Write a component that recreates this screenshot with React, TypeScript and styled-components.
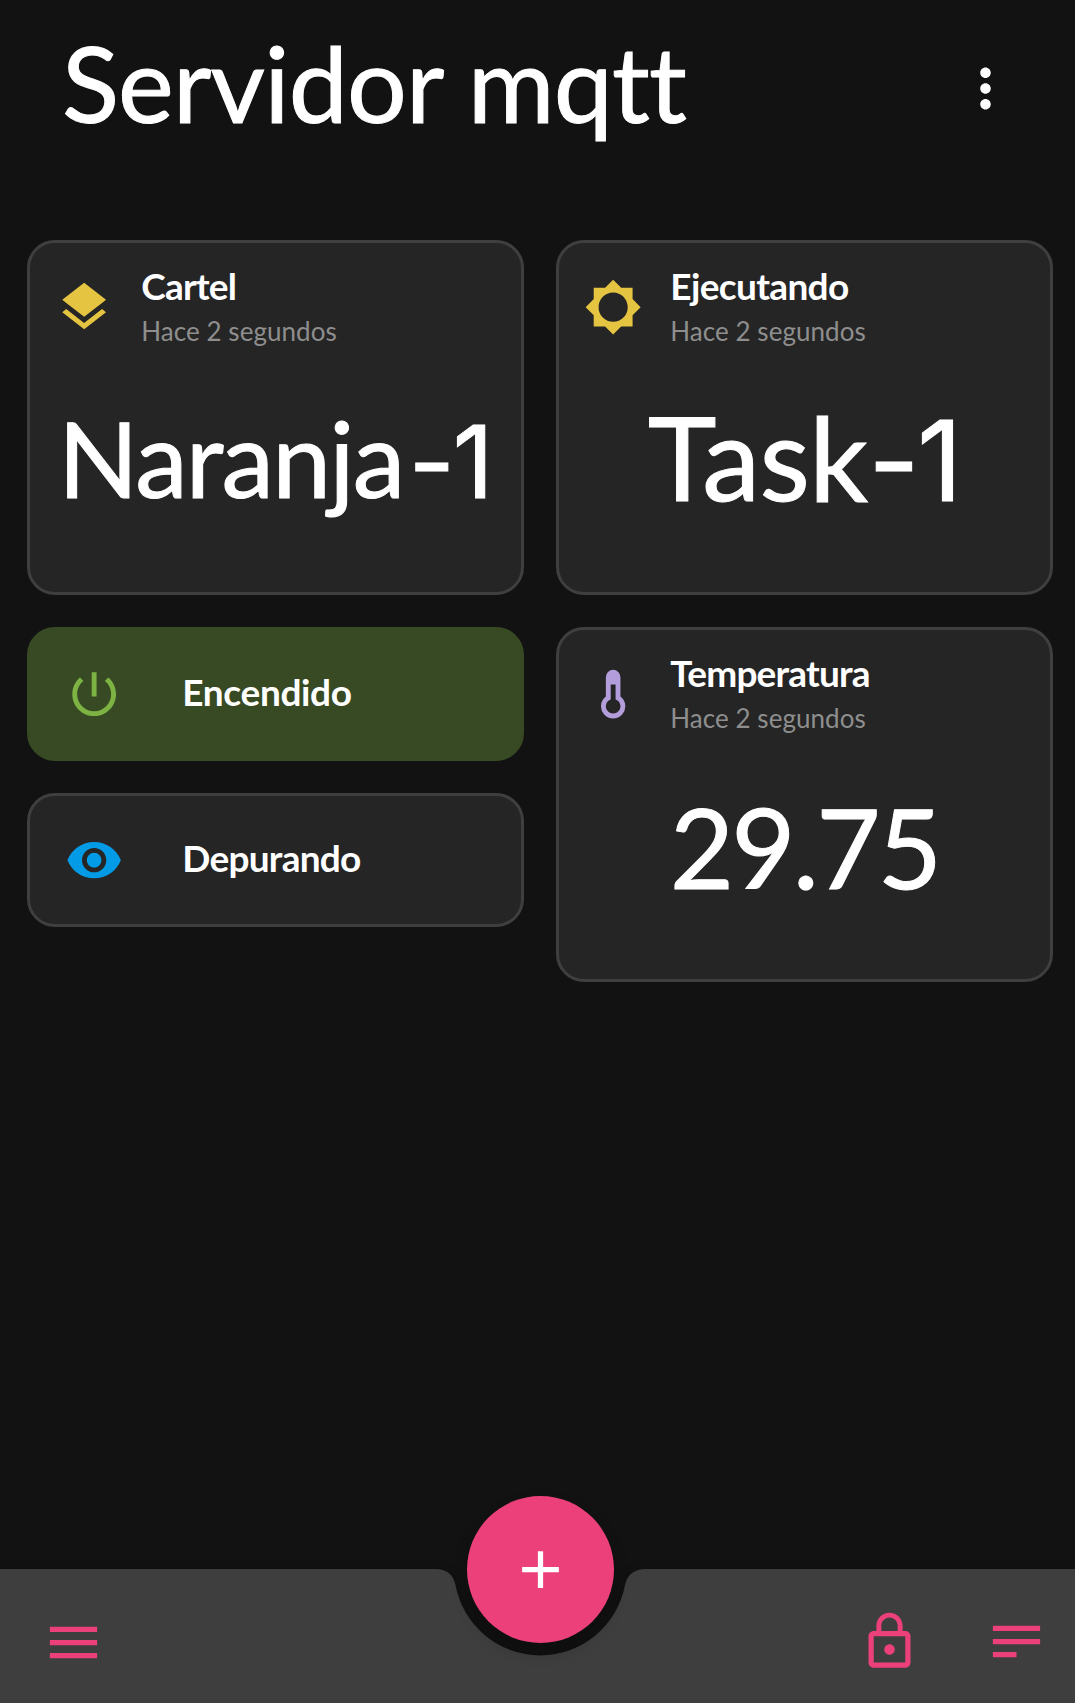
import React from "react";
import styled, { createGlobalStyle } from "styled-components";

const GlobalStyle = createGlobalStyle`
  * { box-sizing: border-box; }
  body { margin: 0; background: #121212; }
`;

const Screen = styled.div`
  position: relative;
  display: flex;
  flex-direction: column;
  width: 1075px;
  height: 1703px;
  overflow: hidden;
  background: #121212;
  color: #fff;
  font-family: Lato, "Open Sans", sans-serif;
`;

const Header = styled.header`
  display: flex;
  align-items: center;
  justify-content: space-between;
  height: 177px;
  padding: 0 58px 0 62px;
`;

const Title = styled.h1`
  margin: 0;
  padding-bottom: 13px;
  font-size: 105.5px;
  line-height: 126px;
  font-weight: 400;
  letter-spacing: -0.8px;
  white-space: nowrap;
  -webkit-text-stroke: 1px #fff;
`;

const Glyph = styled.svg<{ $size: number }>`
  display: block;
  flex: none;
  width: ${(p) => p.$size}px;
  height: ${(p) => p.$size}px;
  fill: currentColor;
`;

const IconButton = styled.button<{ $color: string }>`
  display: flex;
  padding: 0;
  border: 0;
  background: none;
  color: ${(p) => p.$color};
`;

const Board = styled.main`
  display: flex;
  gap: 32px;
  align-items: flex-start;
  padding: 63px 22px 0 27px;
`;

const Column = styled.div`
  display: flex;
  flex-direction: column;
  gap: 32px;
  width: 497px;
`;

const Tile = styled.section`
  display: flex;
  flex-direction: column;
  height: 355px;
  border: 3px solid #3f3f3f;
  border-radius: 28px;
  background: #252525;
`;

const TileHead = styled.div`
  display: flex;
  align-items: center;
  gap: 28px;
  height: 109px;
  padding: 21px 0 0 25px;
`;

const TileIcon = styled.span<{ $color: string }>`
  display: flex;
  padding-bottom: 2px;
  color: ${(p) => p.$color};
`;

const Name = styled.div<{ $spacing: number }>`
  font-size: 37px;
  line-height: 44px;
  font-weight: 700;
  letter-spacing: ${(p) => p.$spacing}px;
  white-space: nowrap;
`;

const Age = styled.div`
  padding-top: 2px;
  font-size: 26px;
  line-height: 43px;
  letter-spacing: 0.05px;
  color: #8e8e8e;
  white-space: nowrap;
`;

const Value = styled.div<{ $size: number; $spacing: number; $lift: number }>`
  display: flex;
  flex: 1;
  align-items: center;
  justify-content: center;
  padding-bottom: ${(p) => p.$lift}px;
  font-size: ${(p) => p.$size}px;
  line-height: 1.2;
  letter-spacing: ${(p) => p.$spacing}px;
  white-space: nowrap;
  -webkit-text-stroke: 1px #fff;
`;

const Suffix = styled.span<{ $gap: number }>`
  margin: 0 1.4px 0 ${(p) => p.$gap}px;
  font-family: Inter, sans-serif;
  font-size: 0.95em;
  line-height: 0;
  letter-spacing: -0.02em;
`;

const Toggle = styled.section<{ $on?: boolean }>`
  display: flex;
  align-items: center;
  gap: 59px;
  height: 134px;
  padding-left: 35px;
  border: 3px solid ${(p) => (p.$on ? "#384a23" : "#3f3f3f")};
  border-radius: 28px;
  background: ${(p) => (p.$on ? "#384a23" : "#252525")};
`;

const ToggleIcon = styled.span<{ $color: string }>`
  display: flex;
  color: ${(p) => p.$color};
`;

const ToggleName = styled(Name)`
  padding-bottom: 4px;
`;

const BottomBar = styled.nav`
  position: relative;
  display: flex;
  align-items: center;
  height: 134px;
  margin-top: auto;
  padding: 13px 27.5px 0 42px;
`;

const BarShape = styled.svg`
  position: absolute;
  inset: 0;
  width: 1075px;
  height: 134px;
  overflow: visible;
  fill: #3e3e3e;
  filter: drop-shadow(0 0 4px rgba(0, 0, 0, 0.25));
`;

const BarActions = styled.div`
  position: relative;
  display: flex;
  gap: 63.5px;
  margin-left: auto;
  padding-bottom: 2px;
`;

const BarStart = styled.div`
  position: relative;
`;

const Fab = styled.button`
  position: absolute;
  left: 467px;
  top: -73px;
  display: flex;
  align-items: center;
  justify-content: center;
  width: 147px;
  height: 147px;
  padding: 0;
  border: 0;
  border-radius: 50%;
  background: #ec407a;
  color: #fff;
  box-shadow: 0 9px 16px rgba(0, 0, 0, 0.22);
`;

const paths = {
  more: "M12 8c1.1 0 2-.9 2-2s-.9-2-2-2-2 .9-2 2 .9 2 2 2zm0 2c-1.1 0-2 .9-2 2s.9 2 2 2 2-.9 2-2-.9-2-2-2zm0 6c-1.1 0-2 .9-2 2s.9 2 2 2 2-.9 2-2-.9-2-2-2z",
  layers:
    "M11.99 18.54l-7.37-5.73L3 14.07l9 7 9-7-1.63-1.27-7.38 5.74zM12 16l7.36-5.73L21 9l-9-7-9 7 1.63 1.27L12 16z",
  brightness:
    "M20 15.31L23.31 12 20 8.69V4h-4.69L12 .69 8.69 4H4v4.69L.69 12 4 15.31V20h4.69L12 23.31 15.31 20H20v-4.69zM12 18c-3.31 0-6-2.69-6-6s2.69-6 6-6 6 2.69 6 6-2.69 6-6 6z",
  thermometer:
    "M15 13V5a3 3 0 0 0-6 0v8a5 5 0 1 0 6 0zM11 8h2v6.17a3 3 0 1 1-2 0z",
  power:
    "M13 3h-2v10h2V3zm4.83 2.17l-1.42 1.42C17.99 7.86 19 9.81 19 12c0 3.87-3.13 7-7 7s-7-3.13-7-7c0-2.19 1.01-4.14 2.58-5.42L6.17 5.17C4.23 6.82 3 9.26 3 12c0 4.97 4.03 9 9 9s9-4.03 9-9c0-2.74-1.23-5.18-3.17-6.83z",
  eye: "M12 4.5C7 4.5 2.73 7.61 1 12c1.73 4.39 6 7.5 11 7.5s9.27-3.11 11-7.5c-1.73-4.39-6-7.5-11-7.5zM12 17c-2.76 0-5-2.24-5-5s2.24-5 5-5 5 2.24 5 5-2.24 5-5 5zm0-8c-1.66 0-3 1.34-3 3s1.34 3 3 3 3-1.34 3-3-1.34-3-3-3z",
  menu: "M3 18h18v-2H3v2zm0-5h18v-2H3v2zm0-7v2h18V6H3z",
  add: "M19 13h-6v6h-2v-6H5v-2h6V5h2v6h6v2z",
  lock: "M12 17c1.1 0 2-.9 2-2s-.9-2-2-2-2 .9-2 2 .9 2 2 2zm6-9h-1V6c0-2.76-2.24-5-5-5S7 3.24 7 6v2H6c-1.1 0-2 .9-2 2v10c0 1.1.9 2 2 2h12c1.1 0 2-.9 2-2V10c0-1.1-.9-2-2-2zM8.9 6c0-1.71 1.39-3.1 3.1-3.1s3.1 1.39 3.1 3.1v2H8.9V6zM18 20H6V10h12v10z",
  notes: "M3 6h18v2H3zM3 11h18v2H3zM3 16h9v2H3z",
};

type IconName = keyof typeof paths;

const Icon = ({ name, size = 58.3 }: { name: IconName; size?: number }) => (
  <Glyph $size={size} viewBox="0 0 24 24" aria-hidden="true">
    <path fillRule="evenodd" d={paths[name]} />
  </Glyph>
);

interface SensorProps {
  icon: IconName;
  color: string;
  name: string;
  nameSpacing: number;
  value: string;
  suffix?: string;
  suffixGap?: number;
  size: number;
  spacing: number;
  lift?: number;
}

const Sensor = ({
  icon,
  color,
  name,
  nameSpacing,
  value,
  suffix,
  suffixGap = 0,
  size,
  spacing,
  lift = 30,
}: SensorProps) => (
  <Tile>
    <TileHead>
      <TileIcon $color={color}>
        <Icon name={icon} />
      </TileIcon>
      <div>
        <Name $spacing={nameSpacing}>{name}</Name>
        <Age>Hace 2 segundos</Age>
      </div>
    </TileHead>
    <Value $size={size} $spacing={spacing} $lift={lift}>
      <span>
        {value}
        {suffix && <Suffix $gap={suffixGap}>{suffix}</Suffix>}
      </span>
    </Value>
  </Tile>
);

export default function App() {
  return (
    <>
      <GlobalStyle />
      <Screen>
        <Header>
          <Title>Servidor mqtt</Title>
          <IconButton $color="#fff" aria-label="Más opciones">
            <Icon name="more" size={63} />
          </IconButton>
        </Header>
        <Board>
          <Column>
            <Sensor
              icon="layers"
              color="#e4c441"
              name="Cartel"
              nameSpacing={-0.8}
              value="Naranja"
              suffix="-1"
              suffixGap={5.4}
              size={105.5}
              spacing={-1.8}
            />
            <Toggle $on>
              <ToggleIcon $color="#7cb342">
                <Icon name="power" />
              </ToggleIcon>
              <ToggleName $spacing={-0.35}>Encendido</ToggleName>
            </Toggle>
            <Toggle>
              <ToggleIcon $color="#039be5">
                <Icon name="eye" />
              </ToggleIcon>
              <ToggleName $spacing={-0.75}>Depurando</ToggleName>
            </Toggle>
          </Column>
          <Column>
            <Sensor
              icon="brightness"
              color="#e4c441"
              name="Ejecutando"
              nameSpacing={-0.65}
              value="Task"
              suffix="-1"
              suffixGap={1}
              size={116.5}
              spacing={-0.8}
            />
            <Sensor
              icon="thermometer"
              color="#b39ddb"
              name="Temperatura"
              nameSpacing={-0.8}
              value="29.75"
              size={111}
              spacing={-2.8}
              lift={25}
            />
          </Column>
        </Board>
        <BottomBar>
          <BarShape viewBox="0 0 1075 134" aria-hidden="true">
            <path d="M0 0H435C447 0 453.500 6 455.500 16A86.200 86.200 0 0 0 625 16C627 6 634 0 646 0H1075V134H0Z" />
          </BarShape>
          <BarStart>
            <IconButton $color="#ec407a" aria-label="Menú">
              <Icon name="menu" size={63} />
            </IconButton>
          </BarStart>
          <BarActions>
            <IconButton $color="#ec407a" aria-label="Bloquear">
              <Icon name="lock" size={63} />
            </IconButton>
            <IconButton $color="#ec407a" aria-label="Registro">
              <Icon name="notes" size={63} />
            </IconButton>
          </BarActions>
          <Fab aria-label="Agregar">
            <Icon name="add" size={63} />
          </Fab>
        </BottomBar>
      </Screen>
    </>
  );
}
